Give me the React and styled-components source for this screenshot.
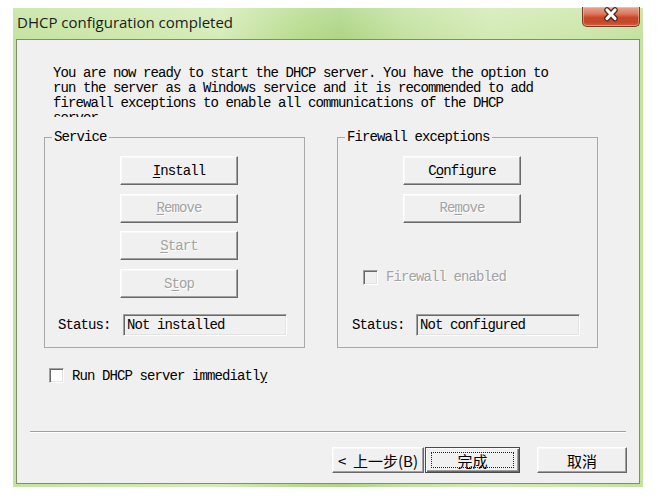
import React from "react";
import styled, { createGlobalStyle } from "styled-components";

const Global = createGlobalStyle`
  html, body { margin: 0; padding: 0; background: #ffffff; }
  body { font-family: "Liberation Mono", monospace; }
`;

const mono = `
  font-family: "Liberation Mono", "Noto Sans CJK SC", monospace;
  font-size: 14px;
  letter-spacing: -0.9px;
`;

const Page = styled.div`
  padding: 8px 0 0 13px;
`;

const Window = styled.div`
  width: 630px;
  height: 479px;
  box-sizing: border-box;
  display: flex;
  flex-direction: column;
  background: linear-gradient(90deg, #c4e3a0 0%, #cde8ac 18%, #d5ecb9 33%, #b6db8c 46%, #aed585 52%, #c3e2a0 62%, #d3eab4 76%, #cbe7aa 90%, #c2e29e 100%);
`;

const TitleBar = styled.div`
  height: 31px;
  display: flex;
  align-items: flex-start;
  padding-left: 4px;
  background: linear-gradient(180deg, rgba(255,255,255,0.18), rgba(255,255,255,0));
`;

const TitleText = styled.div`
  font-family: "Open Sans", "Noto Sans", sans-serif;
  font-size: 15px;
  line-height: 20px;
  margin-top: 4px;
  color: #1c1c1c;
`;

const CloseButton = styled.div`
  margin-left: auto;
  margin-right: 3px;
  margin-top: -1px;
  width: 58px;
  height: 20px;
  box-sizing: border-box;
  border: 1px solid #7a3a26;
  border-top: none;
  border-radius: 0 0 5px 5px;
  background: linear-gradient(180deg, #e8a590 0%, #dc7c60 35%, #c9482a 55%, #c5472a 80%, #d0643e 100%);
  box-shadow: inset 0 0 0 1px rgba(255, 210, 190, 0.45);
  display: flex;
  justify-content: center;
  align-items: flex-start;
`;

const Client = styled.div`
  flex: 1;
  margin: 0 3px 3px;
  border: 1px solid #7d8e6d;
  background: #f0f0f0;
  display: flex;
  flex-direction: column;
`;

const Intro = styled.div`
  ${mono}
  color: #000;
  margin: 26px 0 0 36px;
  height: 51px;
  margin-bottom: 1px;
  line-height: 15px;
  overflow: hidden;
  white-space: pre;
`;

const GroupRow = styled.div`
  display: flex;
  gap: 32px;
  margin: 11px 0 0 27px;
`;

const Group = styled.fieldset`
  width: 261px;
  box-sizing: border-box;
  margin: 0;
  padding: 11px 0 11px 0;
  border: 1px solid #a8a8a8;
  min-width: 0;
`;

const Legend = styled.legend`
  ${mono}
  color: #000;
  line-height: 16px;
  margin-left: 7px;
  padding: 0 2px;
`;

const ButtonStack = styled.div`
  display: flex;
  flex-direction: column;
  gap: 8.7px;
  margin-left: ${(p) => p.$inset}px;
`;

const Btn = styled.button`
  ${mono}
  width: ${(p) => p.$w || 118}px;
  height: ${(p) => p.$h || 29}px;
  box-sizing: border-box;
  padding: 0;
  background: #f0f0f0;
  border: 1px solid;
  border-color: #ffffff #696969 #696969 #ffffff;
  box-shadow: inset -1px -1px #a0a0a0, inset 1px 1px #f8f8f8;
  color: ${(p) => (p.$disabled ? "#a3a3a3" : "#000")};
  text-shadow: ${(p) => (p.$disabled ? "1px 1px #ffffff" : "none")};
  display: flex;
  align-items: center;
  justify-content: center;
  u { text-underline-offset: 2px; }
`;

const CjkBtn = styled(Btn)`
  font-family: "Noto Sans CJK SC", sans-serif;
  font-size: 15px;
  letter-spacing: 0;
  line-height: 1;
  white-space: pre;
`;

const DefaultBtn = styled(CjkBtn)`
  border: 1px solid #4a4a4a;
  box-shadow: inset 1px 1px #ffffff, inset -1px -1px #696969, inset -2px -2px #a0a0a0;
  padding: 4px 5px;
`;

const FocusRect = styled.span`
  flex: 1;
  align-self: stretch;
  border: 1px dotted #222;
  display: flex;
  align-items: center;
  justify-content: center;
`;

const StatusRow = styled.div`
  display: flex;
  align-items: center;
  margin-top: ${(p) => p.$top}px;
  padding-left: ${(p) => p.$pad}px;
`;

const StatusLabel = styled.span`
  ${mono}
  color: #000;
  width: ${(p) => p.$w}px;
`;

const StatusField = styled.div`
  ${mono}
  width: 164px;
  height: 22px;
  box-sizing: border-box;
  border: 1px solid;
  border-color: #a0a0a0 #ffffff #ffffff #a0a0a0;
  box-shadow: inset 1px 1px #696969, inset -1px -1px #e3e3e3;
  background: #f0f0f0;
  color: #000;
  padding-left: 3px;
  display: flex;
  align-items: center;
`;

const CheckRow = styled.label`
  display: flex;
  align-items: center;
  gap: 8px;
  margin-top: ${(p) => p.$top}px;
  margin-left: ${(p) => p.$left}px;
  height: 15px;
`;

const CheckBox = styled.span`
  width: 15px;
  height: 15px;
  box-sizing: border-box;
  border: 1px solid;
  border-color: #a0a0a0 #ffffff #ffffff #a0a0a0;
  box-shadow: inset 1px 1px #696969, inset -1px -1px #e3e3e3;
  background: ${(p) => (p.$disabled ? "#f0f0f0" : "#ffffff")};
`;

const CheckText = styled.span`
  ${mono}
  color: ${(p) => (p.$disabled ? "#a3a3a3" : "#000")};
  text-shadow: ${(p) => (p.$disabled ? "1px 1px #ffffff" : "none")};
  u { text-underline-offset: 2px; }
`;

const Separator = styled.div`
  margin: 48px 13px 0 13px;
  border-top: 1px solid #a0a0a0;
  border-bottom: 1px solid #ffffff;
`;

const ButtonBar = styled.div`
  display: flex;
  justify-content: flex-end;
  margin-top: 14px;
  padding-right: 12px;
`;

const Spacer = styled.div`
  width: ${(p) => p.$w}px;
`;

const introText = `You are now ready to start the DHCP server. You have the option to
run the server as a Windows service and it is recommended to add
firewall exceptions to enable all communications of the DHCP
server.`;

function CloseGlyph() {
  return (
    <svg width="16" height="15" viewBox="0 0 16 15">
      <path d="M4 3 L12 11.5 M12 3 L4 11.5" stroke="#4e2418" strokeWidth="5.5" strokeLinecap="round" fill="none" />
      <path d="M4 3 L12 11.5 M12 3 L4 11.5" stroke="#ffffff" strokeWidth="3.2" strokeLinecap="round" fill="none" />
    </svg>
  );
}

export default function App() {
  return (
    <Page>
      <Global />
      <Window>
        <TitleBar>
          <TitleText>DHCP configuration completed</TitleText>
          <CloseButton>
            <CloseGlyph />
          </CloseButton>
        </TitleBar>
        <Client>
          <Intro>{introText}</Intro>
          <GroupRow>
            <Group>
              <Legend>Service</Legend>
              <ButtonStack $inset={75}>
                <Btn><u>I</u>nstall</Btn>
                <Btn $disabled><u>R</u>emove</Btn>
                <Btn $disabled><u>S</u>tart</Btn>
                <Btn $disabled>S<u>t</u>op</Btn>
              </ButtonStack>
              <StatusRow $top={16} $pad={13}>
                <StatusLabel $w={65}>Status:</StatusLabel>
                <StatusField>Not installed</StatusField>
              </StatusRow>
            </Group>
            <Group>
              <Legend>Firewall exceptions</Legend>
              <ButtonStack $inset={65}>
                <Btn>C<u>o</u>nfigure</Btn>
                <Btn $disabled>Re<u>m</u>ove</Btn>
              </ButtonStack>
              <CheckRow $top={47} $left={25}>
                <CheckBox $disabled />
                <CheckText $disabled>Firewall enabled</CheckText>
              </CheckRow>
              <StatusRow $top={29} $pad={14}>
                <StatusLabel $w={64}>Status:</StatusLabel>
                <StatusField>Not configured</StatusField>
              </StatusRow>
            </Group>
          </GroupRow>
          <CheckRow $top={20} $left={32}>
            <CheckBox />
            <CheckText>Run DHCP server immediatl<u>y</u></CheckText>
          </CheckRow>
          <Separator />
          <ButtonBar>
            <CjkBtn $w={92} $h={26}>{"<  上一步(B)"}</CjkBtn>
            <Spacer $w={1} />
            <DefaultBtn $w={95} $h={26}>
              <FocusRect>完成</FocusRect>
            </DefaultBtn>
            <Spacer $w={17} />
            <CjkBtn $w={90} $h={26}>取消</CjkBtn>
          </ButtonBar>
        </Client>
      </Window>
    </Page>
  );
}
